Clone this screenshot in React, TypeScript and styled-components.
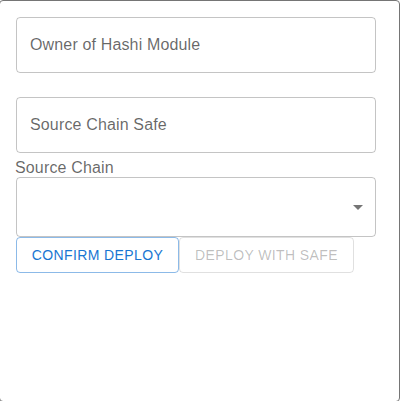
import styled, { createGlobalStyle } from 'styled-components';

const GlobalStyle = createGlobalStyle`
  html, body {
    margin: 0;
    padding: 0;
    background: #fff;
    overflow: hidden;
  }
  body {
    font-family: 'Liberation Sans', Arial, sans-serif;
  }
`;

const Frame = styled.div`
  box-sizing: border-box;
  width: 401px;
  height: 402px;
  margin-left: -1px;
  border: 1px solid #757575;
  border-radius: 4px;
  background: #fff;
  padding: 16px 23px 16px 16px;
  display: flex;
  flex-direction: column;
`;

const Field = styled.div<{ $gap?: number }>`
  box-sizing: border-box;
  height: 56px;
  width: 360px;
  border: 1px solid rgba(0, 0, 0, 0.23);
  border-radius: 4px;
  display: flex;
  align-items: center;
  padding: 0 14px 1px 13px;
  margin-bottom: ${(p) => p.$gap ?? 0}px;
  font-size: 16px;
  color: rgba(0, 0, 0, 0.6);
  letter-spacing: 0.00938em;
`;

const Label = styled.div`
  font-size: 16px;
  line-height: 24px;
  height: 24px;
  padding-top: 3px;
  box-sizing: border-box;
  color: rgba(0, 0, 0, 0.6);
  letter-spacing: 0.00938em;
  margin-left: -1px;
`;

const Select = styled.div`
  box-sizing: border-box;
  height: 60px;
  width: 360px;
  border: 1px solid rgba(0, 0, 0, 0.23);
  border-radius: 4px;
  display: flex;
  align-items: center;
  justify-content: flex-end;
  padding-right: 5px;
`;

const Arrow = styled.svg`
  width: 24px;
  height: 24px;
  fill: rgba(0, 0, 0, 0.54);
`;

const ButtonRow = styled.div`
  display: flex;
`;

const Button = styled.button<{ $disabled?: boolean }>`
  box-sizing: border-box;
  height: 36px;
  padding: 5px 0;
  background: transparent;
  border-radius: 4px;
  font-family: 'Liberation Sans', Arial, sans-serif;
  font-weight: 400;
  font-size: 14px;
  letter-spacing: 0.02857em;
  text-transform: uppercase;
  border: 1px solid
    ${(p) => (p.$disabled ? 'rgba(0, 0, 0, 0.12)' : 'rgba(25, 118, 210, 0.5)')};
  color: ${(p) => (p.$disabled ? 'rgba(0, 0, 0, 0.26)' : '#1976d2')};
  cursor: ${(p) => (p.$disabled ? 'default' : 'pointer')};
`;

export default function App() {
  return (
    <>
      <GlobalStyle />
      <Frame>
        <Field $gap={24}>Owner of Hashi Module</Field>
        <Field>Source Chain Safe</Field>
        <Label>Source Chain</Label>
        <Select>
          <Arrow viewBox="0 0 24 24">
            <path d="M7 10l5 5 5-5z" />
          </Arrow>
        </Select>
        <ButtonRow>
          <Button style={{ width: 163 }}>Confirm Deploy</Button>
          <Button $disabled style={{ width: 175 }}>
            Deploy with Safe
          </Button>
        </ButtonRow>
      </Frame>
    </>
  );
}
